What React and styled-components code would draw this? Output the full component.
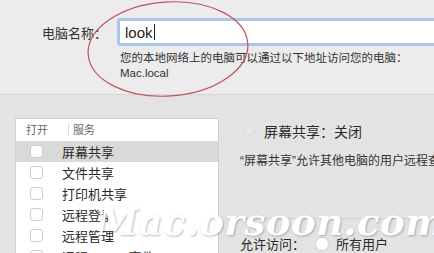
import React from 'react'
import styled, { createGlobalStyle } from 'styled-components'

const GlobalStyle = createGlobalStyle`
  html, body {
    margin: 0;
    padding: 0;
    width: 434px;
    height: 253px;
    overflow: hidden;
    background: #e3e3e3;
  }
  body {
    font-family: "Liberation Sans", "Noto Sans CJK SC", sans-serif;
    color: #2a2a2a;
  }
`

const Window = styled.div`
  position: relative;
  width: 434px;
  height: 253px;
  overflow: hidden;
`

const NameSection = styled.div`
  height: 95px;
  background: #ececec;
  border-bottom: 1px solid #d6d6d6;
  padding-top: 18px;
  box-sizing: border-box;
`

const NameRow = styled.div`
  display: flex;
  align-items: center;
`

const NameLabel = styled.div`
  width: 107px;
  text-align: right;
  font-size: 13px;
  color: #333;
  margin-right: 10px;
`

const NameInput = styled.div`
  flex: 1;
  margin-right: -20px;
  height: 28px;
  box-sizing: border-box;
  border: 3px solid #a9c7ea;
  border-radius: 3px;
  background: #fff;
  display: flex;
  align-items: center;
  padding-left: 5px;
  font-size: 15px;
  color: #222;
`

const Caret = styled.span`
  display: inline-block;
  width: 1px;
  height: 16px;
  background: #222;
  margin-left: 1px;
`

const Hint = styled.div`
  padding-left: 120px;
  margin-top: 5px;
  font-size: 11.5px;
  line-height: 15px;
  color: #333;
`

const Lower = styled.div`
  display: flex;
  padding: 23px 0 0 15px;
  height: 157px;
`

const ServiceTable = styled.div`
  width: 202px;
  flex-shrink: 0;
  background: #fff;
  border: 1px solid #cfcfcf;
  border-bottom: none;
`

const HeaderRow = styled.div`
  display: flex;
  align-items: center;
  height: 22px;
  font-size: 11px;
  color: #666;
`

const HeadCell = styled.div`
  width: ${p => p.width || 'auto'};
  padding-left: ${p => p.pad || 0}px;
  border-left: ${p => (p.divider ? '1px solid #dcdcdc' : 'none')};
  line-height: 14px;
`

const Row = styled.div`
  display: flex;
  align-items: center;
  height: 21px;
  background: ${p => (p.selected ? '#d9d9d9' : 'transparent')};
  font-size: 13px;
  color: #2a2a2a;
`

const Check = styled.span`
  width: 13px;
  height: 13px;
  box-sizing: border-box;
  border: 1px solid #cdcdcd;
  border-radius: 3px;
  background: #fff;
  margin: 0 19px 0 14px;
`

const Detail = styled.div`
  flex: 1;
  display: flex;
  flex-direction: column;
  padding-left: 21px;
  white-space: nowrap;
`

const StatusLine = styled.div`
  display: flex;
  align-items: center;
  margin-top: 3px;
  font-size: 14px;
  color: #2a2a2a;
`

const Radio = styled.span`
  width: ${p => p.size}px;
  height: ${p => p.size}px;
  border-radius: 50%;
  box-sizing: border-box;
  background: ${p => (p.faint ? '#e6e6e6' : '#fff')};
  border: 1px solid ${p => (p.faint ? '#dadada' : '#d4d4d4')};
  margin: 0 ${p => p.gap}px 0 ${p => p.left || 0}px;
`

const Description = styled.div`
  margin-top: 10px;
  font-size: 12px;
  color: #333;
`

const Divider = styled.div`
  margin: 50px 0 0 -3px;
  border-top: 1px solid #d3d3d3;
`

const AccessRow = styled.div`
  display: flex;
  align-items: center;
  margin-top: 15px;
  font-size: 13px;
  color: #2a2a2a;
`

const Ellipse = styled.svg`
  position: absolute;
  left: 84px;
  top: 0;
  pointer-events: none;
`

const Watermark = styled.div`
  position: absolute;
  left: 97px;
  top: 198px;
  font-family: "DejaVu Serif", "Liberation Serif", serif;
  font-weight: bold;
  font-style: italic;
  font-size: 37px;
  line-height: 48px;
  letter-spacing: 0.5px;
  color: #fff;
  text-shadow: 1px 1px 2px rgba(60, 60, 60, 0.35);
  white-space: nowrap;
  pointer-events: none;
`

const services = [
  { name: '屏幕共享', selected: true },
  { name: '文件共享' },
  { name: '打印机共享' },
  { name: '远程登录' },
  { name: '远程管理' },
  { name: '远程 Apple 事件' },
]

export default function App () {
  return (
    <Window>
      <GlobalStyle />
      <NameSection>
        <NameRow>
          <NameLabel>电脑名称：</NameLabel>
          <NameInput>look<Caret /></NameInput>
        </NameRow>
        <Hint>
          您的本地网络上的电脑可以通过以下地址访问您的电脑：<br />
          Mac.local
        </Hint>
      </NameSection>
      <Lower>
        <ServiceTable>
          <HeaderRow>
            <HeadCell width='42px' pad={10}>打开</HeadCell>
            <HeadCell divider pad={4}>服务</HeadCell>
          </HeaderRow>
          {services.map(s => (
            <Row key={s.name} selected={s.selected}>
              <Check />
              {s.name}
            </Row>
          ))}
        </ServiceTable>
        <Detail>
          <StatusLine>
            <Radio size={10} gap={10} left={4} faint />
            屏幕共享：关闭
          </StatusLine>
          <Description>“屏幕共享”允许其他电脑的用户远程查看并控制此电脑。</Description>
          <Divider />
          <AccessRow>
            允许访问：
            <Radio size={14} gap={7} left={10} />
            所有用户
          </AccessRow>
        </Detail>
      </Lower>
      <Ellipse width='170' height='100' viewBox='0 0 170 100'>
        <ellipse cx='84' cy='49' rx='80' ry='47' fill='none' stroke='#c4525c' strokeWidth='1.2' transform='rotate(-4 84 49)' />
      </Ellipse>
      <Watermark>Mac.orsoon.com</Watermark>
    </Window>
  )
}
